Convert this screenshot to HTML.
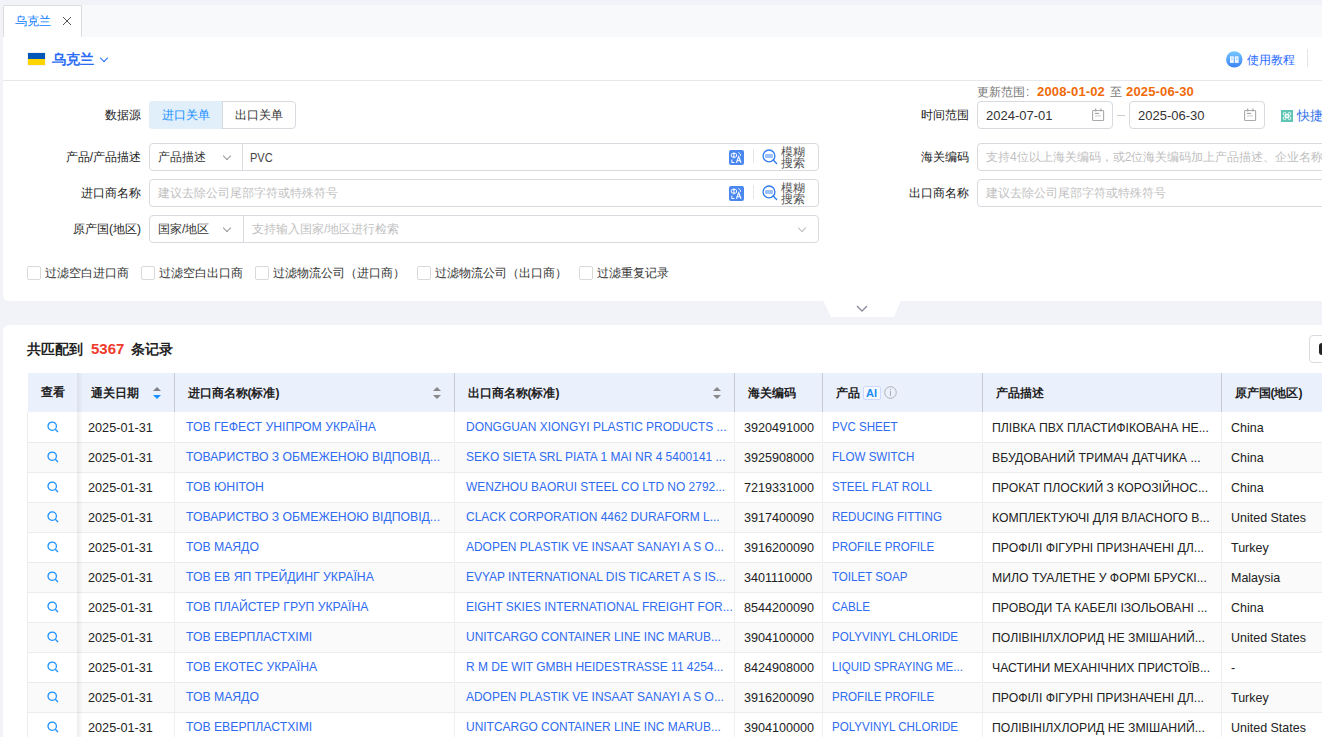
<!DOCTYPE html>
<html><head><meta charset="utf-8">
<style>
*{box-sizing:border-box;margin:0;padding:0}
html,body{width:1322px;height:737px;overflow:hidden;background:#f2f3f8;font-family:"Liberation Sans",sans-serif;font-size:12px;color:#333}
.a{position:absolute;white-space:nowrap}
#tabbar{left:3px;top:5px;width:1340px;height:32px;background:#f8f9fa}
#tab{left:3px;top:5px;width:79px;height:33px;background:#fff;border:1px solid #dcdcdc;border-bottom:none;border-radius:2px 2px 0 0}
#panel1{left:3px;top:37px;width:1340px;height:264px;background:#fff;border-radius:0 0 6px 6px}
#panel2{left:3px;top:325px;width:1340px;height:420px;background:#fff;border-radius:6px 0 0 0}
.lbl{position:absolute;text-align:right;font-size:12px;color:#222;white-space:nowrap;width:120px;line-height:28px;height:28px}
.box{position:absolute;border:1px solid #d9dae0;border-radius:4px;background:#fff;height:28px}
.txt{position:absolute;line-height:28px;font-size:12px;white-space:nowrap}
.ph{color:#bfbfbf}
.chev{position:absolute;width:6px;height:6px;border-right:1px solid #999;border-bottom:1px solid #999;transform:rotate(45deg)}
.cb{position:absolute;top:266px;width:14px;height:14px;border:1px solid #d9d9d9;border-radius:2px;background:#fff}
.cbt{position:absolute;top:265px;line-height:16px;font-size:12px;color:#333;white-space:nowrap}

#res{left:27px;top:341px;font-size:13.5px;font-weight:bold;color:#222;line-height:16px}
#res b{color:#f03a2e;margin:0 7px 0 8px;font-size:15px;display:inline-block;transform:scaleX(1.0);transform-origin:0 50%}
#tbl{position:absolute;left:27px;top:373px;border-collapse:collapse;table-layout:fixed;width:1400px;font-size:13px}
#tbl th{height:39px;background:#ebf0fd;text-align:left;font-weight:bold;font-size:12px;color:#222;padding:2px 0 0 12px;position:relative;white-space:nowrap}
#tbl td{height:30px;border-bottom:1px solid #ececec;padding:1px 0 0 8px;white-space:nowrap;overflow:hidden;color:#222;position:relative}
#tbl tr.alt td{background:#fafafa}
#tbl td.lk{color:#2e6bf0}
#tbl td span{display:inline-block;transform-origin:0 50%}
#tbl td.c0{text-align:center;padding:0;border-left:1px solid #ececec}
#tbl td.c1{padding-left:9px}
#tbl td.c2,#tbl td.c3{padding-left:10px}
.s1{transform:scaleX(0.975)}
.s2{transform:translateY(-1px) scaleX(0.94)}
.s3{transform:translateY(-1px) scaleX(0.92)}
.s4{transform:scaleX(0.97)}
.s5{transform:translateY(-1px) scaleX(0.89)}
.s6{transform:scaleX(0.94)}
.s7{transform:scaleX(0.96)}
#tbl th.c0{text-align:center;padding:0}
.sh{position:absolute;left:77px;top:373px;width:6px;height:364px;background:linear-gradient(to right,rgba(0,0,30,0.07),rgba(0,0,30,0))}
.vd{position:absolute;top:373px;width:1px;height:39px;background:#c8c8d0}
.srt{position:absolute;top:386px;width:8px;height:14px}
.ai{display:inline-block;vertical-align:middle;margin:-2px 0 0 3px;width:18px;height:14px;border:1px solid #cfd8ff;border-radius:2px;background:#f7f9ff;font-size:11px;line-height:12px;text-align:center;color:#1a8cf0;font-weight:bold}
.inf{display:inline-block;vertical-align:middle;margin:-2px 0 0 3px}
.upd{position:absolute;top:0;color:#f06a0a;font-size:13px;letter-spacing:0.15px}
</style></head><body>
<div id="tabbar" class="a"></div>
<div id="tab" class="a"></div>
<div class="a" style="left:15px;top:14px;font-size:12.3px;color:#0d7cff;line-height:14px">乌克兰</div>
<svg class="a" style="left:62px;top:16px" width="10" height="10" viewBox="0 0 10 10"><path d="M1 1L9 9M9 1L1 9" stroke="#555" stroke-width="1"/></svg>

<div id="panel1" class="a"></div>
<!-- header -->
<div class="a" style="left:27.5px;top:53px;width:17px;height:12.3px;background:#ffd500;box-shadow:0 0 0 0.5px #e5e5e5"><div style="height:6.1px;background:#0057b7"></div></div>
<div class="a" style="left:51.5px;top:51px;font-size:13.7px;line-height:18px;color:#2b6cf5;font-weight:bold;-webkit-text-stroke:0">乌克兰</div>
<div class="chev" style="left:101px;top:54.5px;border-color:#2b6cf5"></div>
<svg class="a" style="left:1226px;top:50.5px" width="17" height="17" viewBox="0 0 17 17"><defs><linearGradient id="bkg" x1="0" y1="0" x2="0" y2="1"><stop offset="0" stop-color="#78c8ff"/><stop offset="1" stop-color="#3b82f6"/></linearGradient></defs><circle cx="8.3" cy="8.4" r="8.2" fill="url(#bkg)"/><path d="M4 5.3h3.8v6.6H4z" fill="#fff" opacity="0.92"/><path d="M8.8 5.3h3.8v6.6H8.8z" fill="#fff" opacity="0.92"/><path d="M5.2 7h1.5M5.2 8.6h1.5M10 7h1.5M10 8.6h1.5" stroke="#8fc3fa" stroke-width="0.8"/></svg>
<div class="a" style="left:1247px;top:52.7px;font-size:12px;line-height:14px;color:#2a6bff">使用教程</div>
<div class="a" style="left:1307px;top:49px;width:1px;height:18px;background:#e5e5e5"></div>
<div class="a" style="left:3px;top:80px;width:1319px;height:1px;background:#e8e8ec"></div>

<!-- update range -->
<div class="a" style="left:977px;top:85px;font-size:12px;line-height:14px;color:#777">更新范围<span style="margin-left:1px">:</span><b class="upd" style="left:60px">2008-01-02</b><span class="a" style="left:133px;top:0">至</span><b class="upd" style="left:149px">2025-06-30</b></div>

<!-- row1 -->
<div class="lbl" style="left:21px;top:101px">数据源</div>
<div class="box" style="left:149px;top:101px;width:147px;"></div>
<div class="a" style="left:149px;top:101px;width:74px;height:28px;background:#e1effa;border-radius:4px 0 0 4px;border:1px solid #e1effa"></div>
<div class="a" style="left:222px;top:101px;width:1px;height:28px;background:#d9dae0"></div>
<div class="txt" style="left:162px;top:101px;color:#1890ff">进口关单</div>
<div class="txt" style="left:235px;top:101px;color:#333">出口关单</div>

<div class="lbl" style="left:849px;top:101px">时间范围</div>
<div class="box" style="left:977px;top:101px;width:136px"></div>
<div class="txt" style="left:986px;top:102px;color:#333;font-size:13px">2024-07-01</div>
<div class="a" style="left:1117px;top:115px;width:8px;height:1px;background:#ccc"></div>
<div class="box" style="left:1129px;top:101px;width:136px"></div>
<div class="txt" style="left:1138px;top:102px;color:#333;font-size:13px">2025-06-30</div>
<svg class="a" style="left:1091px;top:107px" width="14" height="14" viewBox="0 0 14 14"><rect x="1.6" y="3.5" width="11" height="10" rx="0.8" fill="none" stroke="#aaa" stroke-width="1.1"/><path d="M4.6 1.6v3M9.9 1.6v3" stroke="#aaa" stroke-width="1.3"/><path d="M3.9 6.4h4.2" stroke="#999" stroke-width="1"/><path d="M3.9 8.9h6" stroke="#ccc" stroke-width="1"/></svg>
<svg class="a" style="left:1243px;top:107px" width="14" height="14" viewBox="0 0 14 14"><rect x="1.6" y="3.5" width="11" height="10" rx="0.8" fill="none" stroke="#aaa" stroke-width="1.1"/><path d="M4.6 1.6v3M9.9 1.6v3" stroke="#aaa" stroke-width="1.3"/><path d="M3.9 6.4h4.2" stroke="#999" stroke-width="1"/><path d="M3.9 8.9h6" stroke="#ccc" stroke-width="1"/></svg>
<svg class="a" style="left:1281px;top:110px" width="12" height="12" viewBox="0 0 12 12"><rect width="12" height="12" fill="#5fc4b4"/><path d="M4 4.2h4v3.6H4z" fill="#9fdcd2"/><circle cx="3.6" cy="3.8" r="1.4" fill="none" stroke="#fff" stroke-width="0.9"/><circle cx="8.4" cy="3.8" r="1.4" fill="none" stroke="#fff" stroke-width="0.9"/><circle cx="3.6" cy="8.2" r="1.4" fill="none" stroke="#fff" stroke-width="0.9"/><circle cx="8.4" cy="8.2" r="1.4" fill="none" stroke="#fff" stroke-width="0.9"/><path d="M4.5 5v2M7.5 5v2M5 4.5h2M5 7.5h2" stroke="#fff" stroke-width="0.9"/></svg>
<div class="txt" style="left:1297px;top:102px;color:#2f6fe8;font-size:12.5px">快捷</div>

<!-- row2 -->
<div class="lbl" style="left:21px;top:143px">产品/产品描述</div>
<div class="box" style="left:149px;top:143px;width:670px"></div>
<div class="a" style="left:242px;top:144px;width:1px;height:26px;background:#d9dae0"></div>
<div class="txt" style="left:158px;top:143px">产品描述</div>
<div class="chev" style="left:224px;top:153px"></div>
<div class="txt" style="left:250px;top:144px;font-size:13px;color:#444;transform:scaleX(0.85);transform-origin:0 50%">PVC</div><svg class="a" style="left:729px;top:149.5px" width="15" height="15" viewBox="0 0 15 15"><rect width="15" height="15" rx="2" fill="#4a88f0"/><rect x="2.3" y="3.6" width="5.2" height="3.4" rx="0.8" fill="none" stroke="#fff" stroke-width="1"/><path d="M4.9 2.2v6.2" stroke="#fff" stroke-width="1"/><path d="M9.3 2.4l2.2 1.8v1.6" stroke="#fff" fill="none" stroke-width="0.9"/><path d="M2.8 9.6v2.9h2.6" stroke="#fff" fill="none" stroke-width="1"/><path d="M7.4 12.8l2.3-6.2 2.3 6.2M8.2 10.8h3" stroke="#fff" fill="none" stroke-width="1.1"/></svg><div class="a" style="left:753px;top:149px;width:1px;height:14px;background:#e6e6e6"></div><svg class="a" style="left:762px;top:149px" width="16" height="16" viewBox="0 0 16 16"><circle cx="7" cy="6.9" r="5.9" fill="none" stroke="#2f7bf0" stroke-width="1.3"/><rect x="3" y="4.9" width="8" height="4" rx="1" fill="#9cc0fa"/><path d="M11.2 11.1l3.4 3.4" stroke="#2f7bf0" stroke-width="1.4" stroke-linecap="round"/></svg><div class="a" style="left:781px;top:147px;width:26px;font-size:12px;line-height:11px;color:#555;white-space:normal">模糊<br>搜索</div>

<div class="lbl" style="left:849px;top:143px">海关编码</div>
<div class="box" style="left:977px;top:143px;width:360px"></div>
<div class="txt ph" style="left:986px;top:143px">支持4位以上海关编码，或2位海关编码加上产品描述、企业名称</div>

<!-- row3 -->
<div class="lbl" style="left:21px;top:179px">进口商名称</div>
<div class="box" style="left:149px;top:179px;width:670px"></div>
<div class="txt ph" style="left:158px;top:179px">建议去除公司尾部字符或特殊符号</div><svg class="a" style="left:729px;top:185.5px" width="15" height="15" viewBox="0 0 15 15"><rect width="15" height="15" rx="2" fill="#4a88f0"/><rect x="2.3" y="3.6" width="5.2" height="3.4" rx="0.8" fill="none" stroke="#fff" stroke-width="1"/><path d="M4.9 2.2v6.2" stroke="#fff" stroke-width="1"/><path d="M9.3 2.4l2.2 1.8v1.6" stroke="#fff" fill="none" stroke-width="0.9"/><path d="M2.8 9.6v2.9h2.6" stroke="#fff" fill="none" stroke-width="1"/><path d="M7.4 12.8l2.3-6.2 2.3 6.2M8.2 10.8h3" stroke="#fff" fill="none" stroke-width="1.1"/></svg><div class="a" style="left:753px;top:185px;width:1px;height:14px;background:#e6e6e6"></div><svg class="a" style="left:762px;top:185px" width="16" height="16" viewBox="0 0 16 16"><circle cx="7" cy="6.9" r="5.9" fill="none" stroke="#2f7bf0" stroke-width="1.3"/><rect x="3" y="4.9" width="8" height="4" rx="1" fill="#9cc0fa"/><path d="M11.2 11.1l3.4 3.4" stroke="#2f7bf0" stroke-width="1.4" stroke-linecap="round"/></svg><div class="a" style="left:781px;top:183px;width:26px;font-size:12px;line-height:11px;color:#555;white-space:normal">模糊<br>搜索</div>

<div class="lbl" style="left:849px;top:179px">出口商名称</div>
<div class="box" style="left:977px;top:179px;width:360px"></div>
<div class="txt ph" style="left:986px;top:179px">建议去除公司尾部字符或特殊符号</div>

<!-- row4 -->
<div class="lbl" style="left:21px;top:215px">原产国(地区)</div>
<div class="box" style="left:149px;top:215px;width:670px"></div>
<div class="a" style="left:243px;top:216px;width:1px;height:26px;background:#d9dae0"></div>
<div class="txt" style="left:158px;top:215px">国家/地区</div>
<div class="chev" style="left:224px;top:225px"></div>
<div class="txt ph" style="left:252px;top:215px">支持输入国家/地区进行检索</div>
<div class="chev" style="left:799px;top:225px;border-color:#bbb"></div>

<!-- checkboxes -->
<div class="cb" style="left:27px"></div><div class="cbt" style="left:45px">过滤空白进口商</div>
<div class="cb" style="left:141px"></div><div class="cbt" style="left:159px">过滤空白出口商</div>
<div class="cb" style="left:255px"></div><div class="cbt" style="left:273px">过滤物流公司（进口商）</div>
<div class="cb" style="left:417px"></div><div class="cbt" style="left:435px">过滤物流公司（出口商）</div>
<div class="cb" style="left:579px"></div><div class="cbt" style="left:597px">过滤重复记录</div>

<!-- collapse -->
<svg class="a" style="left:823px;top:300px" width="78" height="18" viewBox="0 0 78 18"><path d="M0 0H78L71 17H8Z" fill="#fff"/><path d="M34 6l5 5l5-5" fill="none" stroke="#8a8a9e" stroke-width="1.3"/></svg>

<div id="panel2" class="a"></div>

<div id="res" class="a">共匹配到<b>5367</b>条记录</div>
<div class="a" style="left:1309px;top:335px;width:30px;height:28px;border:1px solid #d9dae0;border-radius:4px;background:#fff"></div>
<div class="a" style="left:1319px;top:342.5px;width:8px;height:12.5px;background:#222;border-radius:3px"></div>
<!--T0--><table id="tbl">
<colgroup><col style="width:51px"><col style="width:97px"><col style="width:280px"><col style="width:280px"><col style="width:88px"><col style="width:160px"><col style="width:239px"><col style="width:205px"></colgroup>
<tr><th class="c0">查看</th><th>通关日期</th><th>进口商名称(标准)</th><th>出口商名称(标准)</th><th>海关编码</th><th>产品<span class="ai">AI</span><svg class="inf" width="13" height="13" viewBox="0 0 13 13"><circle cx="6.5" cy="6.5" r="5.8" fill="none" stroke="#aaa" stroke-width="0.9"/><rect x="6" y="3" width="1" height="1.2" fill="#aaa"/><rect x="6" y="5.2" width="1" height="4.6" fill="#aaa"/></svg></th><th>产品描述</th><th>原产国(地区)</th></tr>
<tr><td class="c0"><svg style="margin-top:3px" width="12" height="12" viewBox="0 0 12 12"><circle cx="5.2" cy="5.2" r="4.2" fill="none" stroke="#1890ff" stroke-width="1.25"/><path d="M8.3 8.3L11 11" stroke="#1890ff" stroke-width="1.3"/></svg></td><td class="c1"><span class="s1">2025-01-31</span></td><td class="lk c2"><span class="s2">ТОВ ГЕФЕСТ УНІПРОМ УКРАЇНА</span></td><td class="lk c3"><span class="s3">DONGGUAN XIONGYI PLASTIC PRODUCTS ...</span></td><td class="c4"><span class="s4">3920491000</span></td><td class="lk c5"><span class="s5">PVC SHEET</span></td><td class="c6"><span class="s6">ПЛІВКА ПВХ ПЛАСТИФІКОВАНА НЕ...</span></td><td class="c7"><span class="s7">China</span></td></tr>
<tr class="alt"><td class="c0"><svg style="margin-top:3px" width="12" height="12" viewBox="0 0 12 12"><circle cx="5.2" cy="5.2" r="4.2" fill="none" stroke="#1890ff" stroke-width="1.25"/><path d="M8.3 8.3L11 11" stroke="#1890ff" stroke-width="1.3"/></svg></td><td class="c1"><span class="s1">2025-01-31</span></td><td class="lk c2"><span class="s2">ТОВАРИСТВО З ОБМЕЖЕНОЮ ВІДПОВІД...</span></td><td class="lk c3"><span class="s3">SEKO SIETA SRL PIATA 1 MAI NR 4 5400141 ...</span></td><td class="c4"><span class="s4">3925908000</span></td><td class="lk c5"><span class="s5">FLOW SWITCH</span></td><td class="c6"><span class="s6">ВБУДОВАНИЙ ТРИМАЧ ДАТЧИКА ...</span></td><td class="c7"><span class="s7">China</span></td></tr>
<tr><td class="c0"><svg style="margin-top:3px" width="12" height="12" viewBox="0 0 12 12"><circle cx="5.2" cy="5.2" r="4.2" fill="none" stroke="#1890ff" stroke-width="1.25"/><path d="M8.3 8.3L11 11" stroke="#1890ff" stroke-width="1.3"/></svg></td><td class="c1"><span class="s1">2025-01-31</span></td><td class="lk c2"><span class="s2">ТОВ ЮНІТОН</span></td><td class="lk c3"><span class="s3">WENZHOU BAORUI STEEL CO LTD NO 2792...</span></td><td class="c4"><span class="s4">7219331000</span></td><td class="lk c5"><span class="s5">STEEL FLAT ROLL</span></td><td class="c6"><span class="s6">ПРОКАТ ПЛОСКИЙ З КОРОЗІЙНОС...</span></td><td class="c7"><span class="s7">China</span></td></tr>
<tr class="alt"><td class="c0"><svg style="margin-top:3px" width="12" height="12" viewBox="0 0 12 12"><circle cx="5.2" cy="5.2" r="4.2" fill="none" stroke="#1890ff" stroke-width="1.25"/><path d="M8.3 8.3L11 11" stroke="#1890ff" stroke-width="1.3"/></svg></td><td class="c1"><span class="s1">2025-01-31</span></td><td class="lk c2"><span class="s2">ТОВАРИСТВО З ОБМЕЖЕНОЮ ВІДПОВІД...</span></td><td class="lk c3"><span class="s3">CLACK CORPORATION 4462 DURAFORM L...</span></td><td class="c4"><span class="s4">3917400090</span></td><td class="lk c5"><span class="s5">REDUCING FITTING</span></td><td class="c6"><span class="s6">КОМПЛЕКТУЮЧІ ДЛЯ ВЛАСНОГО В...</span></td><td class="c7"><span class="s7">United States</span></td></tr>
<tr><td class="c0"><svg style="margin-top:3px" width="12" height="12" viewBox="0 0 12 12"><circle cx="5.2" cy="5.2" r="4.2" fill="none" stroke="#1890ff" stroke-width="1.25"/><path d="M8.3 8.3L11 11" stroke="#1890ff" stroke-width="1.3"/></svg></td><td class="c1"><span class="s1">2025-01-31</span></td><td class="lk c2"><span class="s2">ТОВ МАЯДО</span></td><td class="lk c3"><span class="s3">ADOPEN PLASTIK VE INSAAT SANAYI A S O...</span></td><td class="c4"><span class="s4">3916200090</span></td><td class="lk c5"><span class="s5">PROFILE PROFILE</span></td><td class="c6"><span class="s6">ПРОФІЛІ ФІГУРНІ ПРИЗНАЧЕНІ ДЛ...</span></td><td class="c7"><span class="s7">Turkey</span></td></tr>
<tr class="alt"><td class="c0"><svg style="margin-top:3px" width="12" height="12" viewBox="0 0 12 12"><circle cx="5.2" cy="5.2" r="4.2" fill="none" stroke="#1890ff" stroke-width="1.25"/><path d="M8.3 8.3L11 11" stroke="#1890ff" stroke-width="1.3"/></svg></td><td class="c1"><span class="s1">2025-01-31</span></td><td class="lk c2"><span class="s2">ТОВ ЕВ ЯП ТРЕЙДИНГ УКРАЇНА</span></td><td class="lk c3"><span class="s3">EVYAP INTERNATIONAL DIS TICARET A S IS...</span></td><td class="c4"><span class="s4">3401110000</span></td><td class="lk c5"><span class="s5">TOILET SOAP</span></td><td class="c6"><span class="s6">МИЛО ТУАЛЕТНЕ У ФОРМІ БРУСКІ...</span></td><td class="c7"><span class="s7">Malaysia</span></td></tr>
<tr><td class="c0"><svg style="margin-top:3px" width="12" height="12" viewBox="0 0 12 12"><circle cx="5.2" cy="5.2" r="4.2" fill="none" stroke="#1890ff" stroke-width="1.25"/><path d="M8.3 8.3L11 11" stroke="#1890ff" stroke-width="1.3"/></svg></td><td class="c1"><span class="s1">2025-01-31</span></td><td class="lk c2"><span class="s2">ТОВ ПЛАЙСТЕР ГРУП УКРАЇНА</span></td><td class="lk c3"><span class="s3">EIGHT SKIES INTERNATIONAL FREIGHT FOR...</span></td><td class="c4"><span class="s4">8544200090</span></td><td class="lk c5"><span class="s5">CABLE</span></td><td class="c6"><span class="s6">ПРОВОДИ ТА КАБЕЛІ ІЗОЛЬОВАНІ ...</span></td><td class="c7"><span class="s7">China</span></td></tr>
<tr class="alt"><td class="c0"><svg style="margin-top:3px" width="12" height="12" viewBox="0 0 12 12"><circle cx="5.2" cy="5.2" r="4.2" fill="none" stroke="#1890ff" stroke-width="1.25"/><path d="M8.3 8.3L11 11" stroke="#1890ff" stroke-width="1.3"/></svg></td><td class="c1"><span class="s1">2025-01-31</span></td><td class="lk c2"><span class="s2">ТОВ ЕВЕРПЛАСТХІМІ</span></td><td class="lk c3"><span class="s3">UNITCARGO CONTAINER LINE INC MARUB...</span></td><td class="c4"><span class="s4">3904100000</span></td><td class="lk c5"><span class="s5">POLYVINYL CHLORIDE</span></td><td class="c6"><span class="s6">ПОЛІВІНІЛХЛОРИД НЕ ЗМІШАНИЙ...</span></td><td class="c7"><span class="s7">United States</span></td></tr>
<tr><td class="c0"><svg style="margin-top:3px" width="12" height="12" viewBox="0 0 12 12"><circle cx="5.2" cy="5.2" r="4.2" fill="none" stroke="#1890ff" stroke-width="1.25"/><path d="M8.3 8.3L11 11" stroke="#1890ff" stroke-width="1.3"/></svg></td><td class="c1"><span class="s1">2025-01-31</span></td><td class="lk c2"><span class="s2">ТОВ ЕКОТЕС УКРАЇНА</span></td><td class="lk c3"><span class="s3">R M DE WIT GMBH HEIDESTRASSE 11 4254...</span></td><td class="c4"><span class="s4">8424908000</span></td><td class="lk c5"><span class="s5">LIQUID SPRAYING ME...</span></td><td class="c6"><span class="s6">ЧАСТИНИ МЕХАНІЧНИХ ПРИСТОЇВ...</span></td><td class="c7"><span class="s7">-</span></td></tr>
<tr class="alt"><td class="c0"><svg style="margin-top:3px" width="12" height="12" viewBox="0 0 12 12"><circle cx="5.2" cy="5.2" r="4.2" fill="none" stroke="#1890ff" stroke-width="1.25"/><path d="M8.3 8.3L11 11" stroke="#1890ff" stroke-width="1.3"/></svg></td><td class="c1"><span class="s1">2025-01-31</span></td><td class="lk c2"><span class="s2">ТОВ МАЯДО</span></td><td class="lk c3"><span class="s3">ADOPEN PLASTIK VE INSAAT SANAYI A S O...</span></td><td class="c4"><span class="s4">3916200090</span></td><td class="lk c5"><span class="s5">PROFILE PROFILE</span></td><td class="c6"><span class="s6">ПРОФІЛІ ФІГУРНІ ПРИЗНАЧЕНІ ДЛ...</span></td><td class="c7"><span class="s7">Turkey</span></td></tr>
<tr><td class="c0"><svg style="margin-top:3px" width="12" height="12" viewBox="0 0 12 12"><circle cx="5.2" cy="5.2" r="4.2" fill="none" stroke="#1890ff" stroke-width="1.25"/><path d="M8.3 8.3L11 11" stroke="#1890ff" stroke-width="1.3"/></svg></td><td class="c1"><span class="s1">2025-01-31</span></td><td class="lk c2"><span class="s2">ТОВ ЕВЕРПЛАСТХІМІ</span></td><td class="lk c3"><span class="s3">UNITCARGO CONTAINER LINE INC MARUB...</span></td><td class="c4"><span class="s4">3904100000</span></td><td class="lk c5"><span class="s5">POLYVINYL CHLORIDE</span></td><td class="c6"><span class="s6">ПОЛІВІНІЛХЛОРИД НЕ ЗМІШАНИЙ...</span></td><td class="c7"><span class="s7">United States</span></td></tr>
</table><!--T1-->
<div class="a" style="left:174px;top:412px;width:1px;height:330px;background:#efeff2"></div><div class="a" style="left:454px;top:412px;width:1px;height:330px;background:#efeff2"></div><div class="a" style="left:734px;top:412px;width:1px;height:330px;background:#efeff2"></div><div class="a" style="left:822px;top:412px;width:1px;height:330px;background:#efeff2"></div><div class="a" style="left:982px;top:412px;width:1px;height:330px;background:#efeff2"></div><div class="a" style="left:1221px;top:412px;width:1px;height:330px;background:#efeff2"></div><div class="sh"></div>
<div class="vd" style="left:174px"></div>
<div class="vd" style="left:454px"></div>
<div class="vd" style="left:734px"></div>
<div class="vd" style="left:822px"></div>
<div class="vd" style="left:982px"></div>
<div class="vd" style="left:1221px"></div>
<svg class="srt a" style="left:153px" viewBox="0 0 8 14"><path d="M4 1L8 5H0Z" fill="#808088"/><path d="M4 13L8 9H0Z" fill="#1890ff"/></svg>
<svg class="srt a" style="left:433px" viewBox="0 0 8 14"><path d="M4 1L8 5H0Z" fill="#888"/><path d="M4 13L8 9H0Z" fill="#888"/></svg>
<svg class="srt a" style="left:713px" viewBox="0 0 8 14"><path d="M4 1L8 5H0Z" fill="#888"/><path d="M4 13L8 9H0Z" fill="#888"/></svg>
</body></html>
